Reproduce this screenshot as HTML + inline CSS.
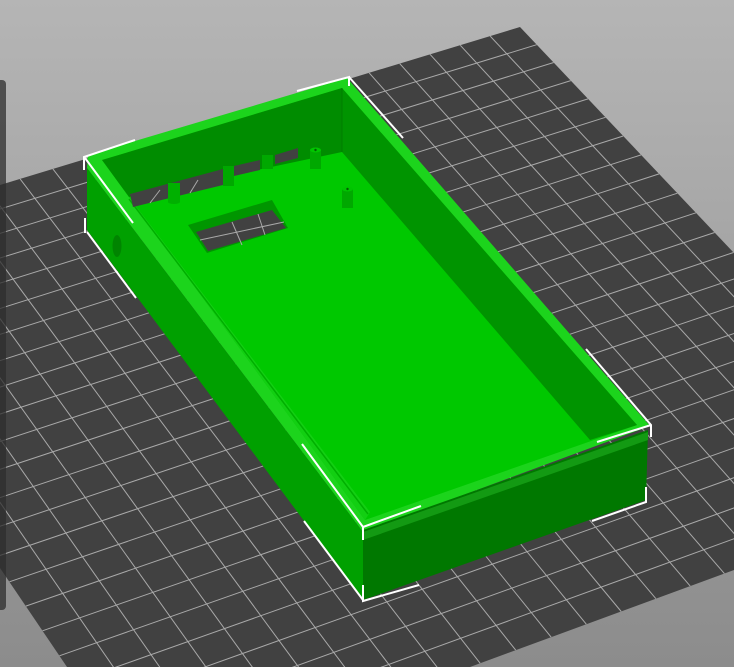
<!DOCTYPE html>
<html><head><meta charset="utf-8"><style>
html,body{margin:0;padding:0;width:734px;height:667px;overflow:hidden;background:linear-gradient(#b5b5b5,#8c8c8c);}
svg{position:absolute;left:0;top:0;display:block}
.bar{position:absolute;left:0;top:80px;width:6px;height:530px;background:rgba(45,45,45,0.75);border-radius:0 4px 4px 0}
</style></head><body>
<svg id="s" width="734" height="667" viewBox="0 0 734 667">
<defs><clipPath id="pc"><polygon points="520,27 734,253 734,570 470,667 67,667 0,568 0,185"/></clipPath></defs>
<polygon points="520,27 734,253 734,570 470,667 67,667 0,568 0,185" fill="#414141"/>
<g id="grid" clip-path="url(#pc)" stroke="#a9a9a9" stroke-width="1" fill="none"></g>

<polygon points="88,155 347,78 650,426 363,532 87,168" fill="#1cd41c"/>
<polygon points="102,160 342,88 637,425 365,520" fill="#00c800"/>
<polygon points="102,160 342,88 342,152 129,197" fill="#008c00"/>
<polygon points="342,88 637,425 590,440 342,152" fill="#009400"/>
<line x1="342" y1="88" x2="342" y2="152" stroke="#007e00" stroke-width="1"/>
<polygon points="102,160 129,197 370,512 365,520" fill="#12cf12"/>
<line x1="129" y1="199" x2="368" y2="514" stroke="#00b000" stroke-width="1.5"/>
<polygon points="130,194 223,169 223,185 133,207" fill="#414141"/>
<line x1="150" y1="203" x2="160" y2="190" stroke="#a9a9a9"/>
<line x1="190" y1="193" x2="198" y2="180" stroke="#a9a9a9"/>
<polygon points="234,166 260,160 260,170 234,176" fill="#414141"/>
<polygon points="275,155 298,148 298,158 275,164" fill="#414141"/>
<rect x="223" y="166" width="11" height="20" fill="#00a800"/>
<rect x="262" y="155" width="11" height="14" fill="#00a800"/>
<rect x="168" y="183" width="12" height="19" fill="#00b000"/>
<ellipse cx="174" cy="202" rx="6" ry="2" fill="#00b000"/>
<rect x="310" y="150" width="11" height="19" fill="#00a800"/>
<ellipse cx="315.5" cy="150" rx="5.5" ry="2.5" fill="#00c400"/>
<circle cx="315.5" cy="150" r="1.2" fill="#006000"/>
<rect x="342" y="189" width="11" height="19" fill="#00a800"/>
<ellipse cx="347.5" cy="189" rx="5.5" ry="2.5" fill="#00c400"/>
<circle cx="347.5" cy="189" r="1.2" fill="#006000"/>
<polygon points="188,225 272,200 288,228 207,253" fill="#009600"/>
<polygon points="196,232 272,210 286,228 208,251" fill="#414141"/>
<g stroke="#a9a9a9" stroke-width="1"><line x1="200" y1="240" x2="284" y2="222"/><line x1="232" y1="222" x2="242" y2="245"/><line x1="258" y1="214" x2="265" y2="235"/></g>
<polygon points="87,168 363,532 363,600 87,230" fill="#00a000"/>
<ellipse cx="117" cy="246" rx="4.5" ry="11" fill="#008400"/>
<polygon points="210,322 228,345 226,350 208,327" fill="#1cd41c"/>
<polygon points="363,530 648,430 646,500 363,600" fill="#007800"/>
<polygon points="363,532 648,432 648,440 363,540" fill="#139a13"/>
<polygon points="488,480 524,468 524,472 488,484" fill="#1cd41c"/>
<g stroke="#ffffff" stroke-width="2" fill="none">
<polyline points="135,140 84,157 84,170"/><line x1="85" y1="158" x2="133" y2="223"/>
<line x1="85" y1="218" x2="85" y2="233"/><line x1="87" y1="232" x2="136" y2="298"/>
<polyline points="297,91 349,77 349,86"/><line x1="349" y1="77" x2="403" y2="138"/>
<polyline points="586,349 651,425 651,437"/><line x1="651" y1="425" x2="597" y2="442"/>
<polyline points="646,487 646,502 592,521"/>
<polyline points="302,444 363,527 363,540"/><line x1="363" y1="527" x2="421" y2="506"/>
<polyline points="363,585 363,601 419,585"/><line x1="363" y1="600" x2="304" y2="521"/>
</g>
</svg>
<div class="bar"></div>
<script>
(function(){
var P=[[520,27],[956.7,488.2],[147.3,785.6],[-215,250.3]];
var x0=P[0][0],y0=P[0][1],x1=P[1][0],y1=P[1][1],x2=P[2][0],y2=P[2][1],x3=P[3][0],y3=P[3][1];
var dx1=x1-x2,dx2=x3-x2,dx3=x0-x1+x2-x3,dy1=y1-y2,dy2=y3-y2,dy3=y0-y1+y2-y3;
var den=dx1*dy2-dx2*dy1;
var g=(dx3*dy2-dx2*dy3)/den,h=(dx1*dy3-dx3*dy1)/den;
var a=x1-x0+g*x1,b=x3-x0+h*x3,c=x0,d=y1-y0+g*y1,e=y3-y0+h*y3,f=y0;
function m(u,v){var w=g*u+h*v+1;return [(a*u+b*v+c)/w,(d*u+e*v+f)/w];}
var N=23,s='';
for(var i=1;i<N;i++){var t=i/N;var p=m(t,0),q=m(t,1);
s+='<line x1="'+p[0].toFixed(1)+'" y1="'+p[1].toFixed(1)+'" x2="'+q[0].toFixed(1)+'" y2="'+q[1].toFixed(1)+'"/>';
p=m(0,t);q=m(1,t);
s+='<line x1="'+p[0].toFixed(1)+'" y1="'+p[1].toFixed(1)+'" x2="'+q[0].toFixed(1)+'" y2="'+q[1].toFixed(1)+'"/>';}
document.getElementById('grid').innerHTML=s;
})();
</script>
</body></html>
